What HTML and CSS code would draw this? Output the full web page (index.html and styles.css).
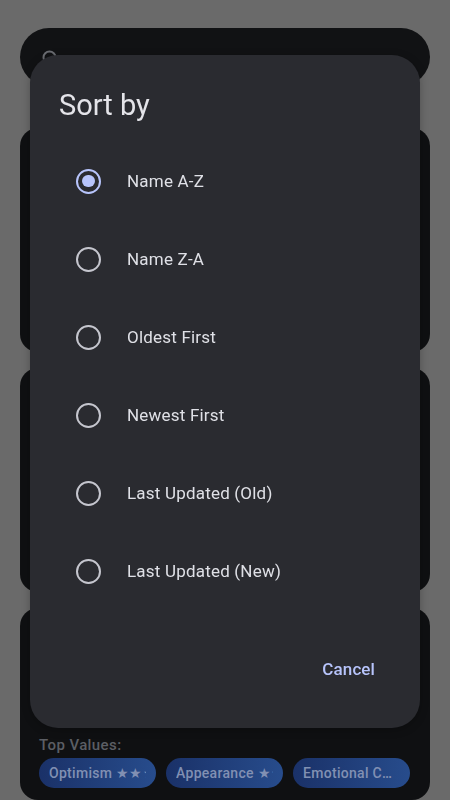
FILE: index.html
```html
<!DOCTYPE html>
<html lang="en">
<head>
<meta charset="utf-8">
<title>Sort by</title>
<link rel="stylesheet" href="styles.css">
</head>
<body>
<div class="app">
  <div class="search">
    <svg class="search-icon" viewBox="0 0 24 24" width="24" height="24"><circle cx="9.5" cy="9.5" r="6" fill="none" stroke="#6a6c71" stroke-width="2"/><path d="M14 14l6 6" stroke="#6a6c71" stroke-width="2" stroke-linecap="round"/></svg>
    <span class="search-text">Search characters</span>
  </div>
  <div class="card"></div>
  <div class="card"></div>
  <div class="card card-last">
    <div class="card-spacer"></div>
    <div class="top-label">Top Values:</div>
    <div class="chips">
      <div class="chip"><span class="chip-text">Optimism ★★★</span></div>
      <div class="chip"><span class="chip-text">Appearance ★★</span></div>
      <div class="chip"><span class="chip-text ellipsis">Emotional Connection</span></div>
    </div>
  </div>
</div>

<div class="dialog" role="dialog">
  <h2 class="dialog-title">Sort by</h2>
  <ul class="options">
    <li class="option"><span class="radio selected"></span><span class="label">Name A-Z</span></li>
    <li class="option"><span class="radio"></span><span class="label">Name Z-A</span></li>
    <li class="option"><span class="radio"></span><span class="label">Oldest First</span></li>
    <li class="option"><span class="radio"></span><span class="label">Newest First</span></li>
    <li class="option"><span class="radio"></span><span class="label">Last Updated (Old)</span></li>
    <li class="option"><span class="radio"></span><span class="label">Last Updated (New)</span></li>
  </ul>
  <div class="actions">
    <button class="btn-text">Cancel</button>
  </div>
</div>
</body>
</html>
```

FILE: styles.css
```css
* { box-sizing: border-box; }
html, body {
  margin: 0;
  padding: 0;
  width: 450px;
  height: 800px;
  overflow: hidden;
  background: #6a6a6a;
  font-family: Roboto, "Noto Sans", sans-serif;
}
.app {
  padding: 28px 20px 0;
  display: flex;
  flex-direction: column;
}
.search {
  height: 58px;
  border-radius: 29px;
  background: #111214;
  display: flex;
  align-items: center;
  padding: 0 20px;
  gap: 14px;
  margin-bottom: 42px;
}
.search-icon { margin-top: 6px; }
.search-text {
  color: #2c2d31;
  font-size: 17px;
  margin-top: 10px;
}
.card {
  height: 224px;
  border-radius: 18px;
  background: #0f1012;
  margin-bottom: 16px;
}
.card-last {
  height: 192px;
  margin-bottom: 0;
  padding: 0 19px;
  display: flex;
  flex-direction: column;
}
.card-spacer { height: 127px; flex: none; }
.top-label {
  color: #5b5e64;
  font-size: 15px;
  font-weight: 500;
  letter-spacing: 0.4px;
  line-height: 20px;
}
.chips {
  display: flex;
  gap: 10px;
  margin-top: 3px;
}
.chip {
  width: 117px;
  height: 30px;
  border-radius: 15px;
  background: linear-gradient(90deg, #1a3168 0%, #274c8c 100%);
  display: flex;
  align-items: center;
  padding: 0 10px;
}
.chip-text {
  color: #8190b3;
  font-size: 14px;
  font-weight: 500;
  letter-spacing: 0.3px;
  white-space: nowrap;
  overflow: hidden;
  text-overflow: clip;
  min-width: 0;
}
.chip-text.ellipsis { text-overflow: ellipsis; }

.dialog {
  position: fixed;
  left: 30px;
  top: 55px;
  width: 390px;
  height: 673px;
  background: #2a2b30;
  border-radius: 28px;
  padding: 32px 0 39px;
  display: flex;
  flex-direction: column;
  box-shadow: 0 2px 8px rgba(0,0,0,0.25);
}
.dialog-title {
  margin: 0 0 19px 29px;
  font-size: 29px;
  font-weight: 400;
  line-height: 36px;
  color: #e4e4e9;
}
.options {
  list-style: none;
  margin: 0;
  padding: 0;
}
.option {
  height: 78px;
  display: flex;
  align-items: center;
  padding-left: 46px;
}
.radio {
  width: 25px;
  height: 25px;
  border-radius: 50%;
  border: 2.5px solid #c5c6ce;
  display: flex;
  align-items: center;
  justify-content: center;
  flex: none;
}
.radio.selected { border-color: #b7c4fb; }
.radio.selected::after {
  content: "";
  width: 12.5px;
  height: 12.5px;
  border-radius: 50%;
  background: #b7c4fb;
}
.label {
  margin-left: 26px;
  font-size: 17px;
  color: #dfe0e6;
  letter-spacing: 0.2px;
}
.actions {
  margin-top: auto;
  display: flex;
  justify-content: flex-end;
  padding-right: 33px;
}
.btn-text {
  background: none;
  border: none;
  height: 40px;
  padding: 0 12px;
  font-family: Roboto, "Noto Sans", sans-serif;
  font-size: 17px;
  font-weight: 500;
  color: #b7c4fb;
  letter-spacing: 0.1px;
}
```
